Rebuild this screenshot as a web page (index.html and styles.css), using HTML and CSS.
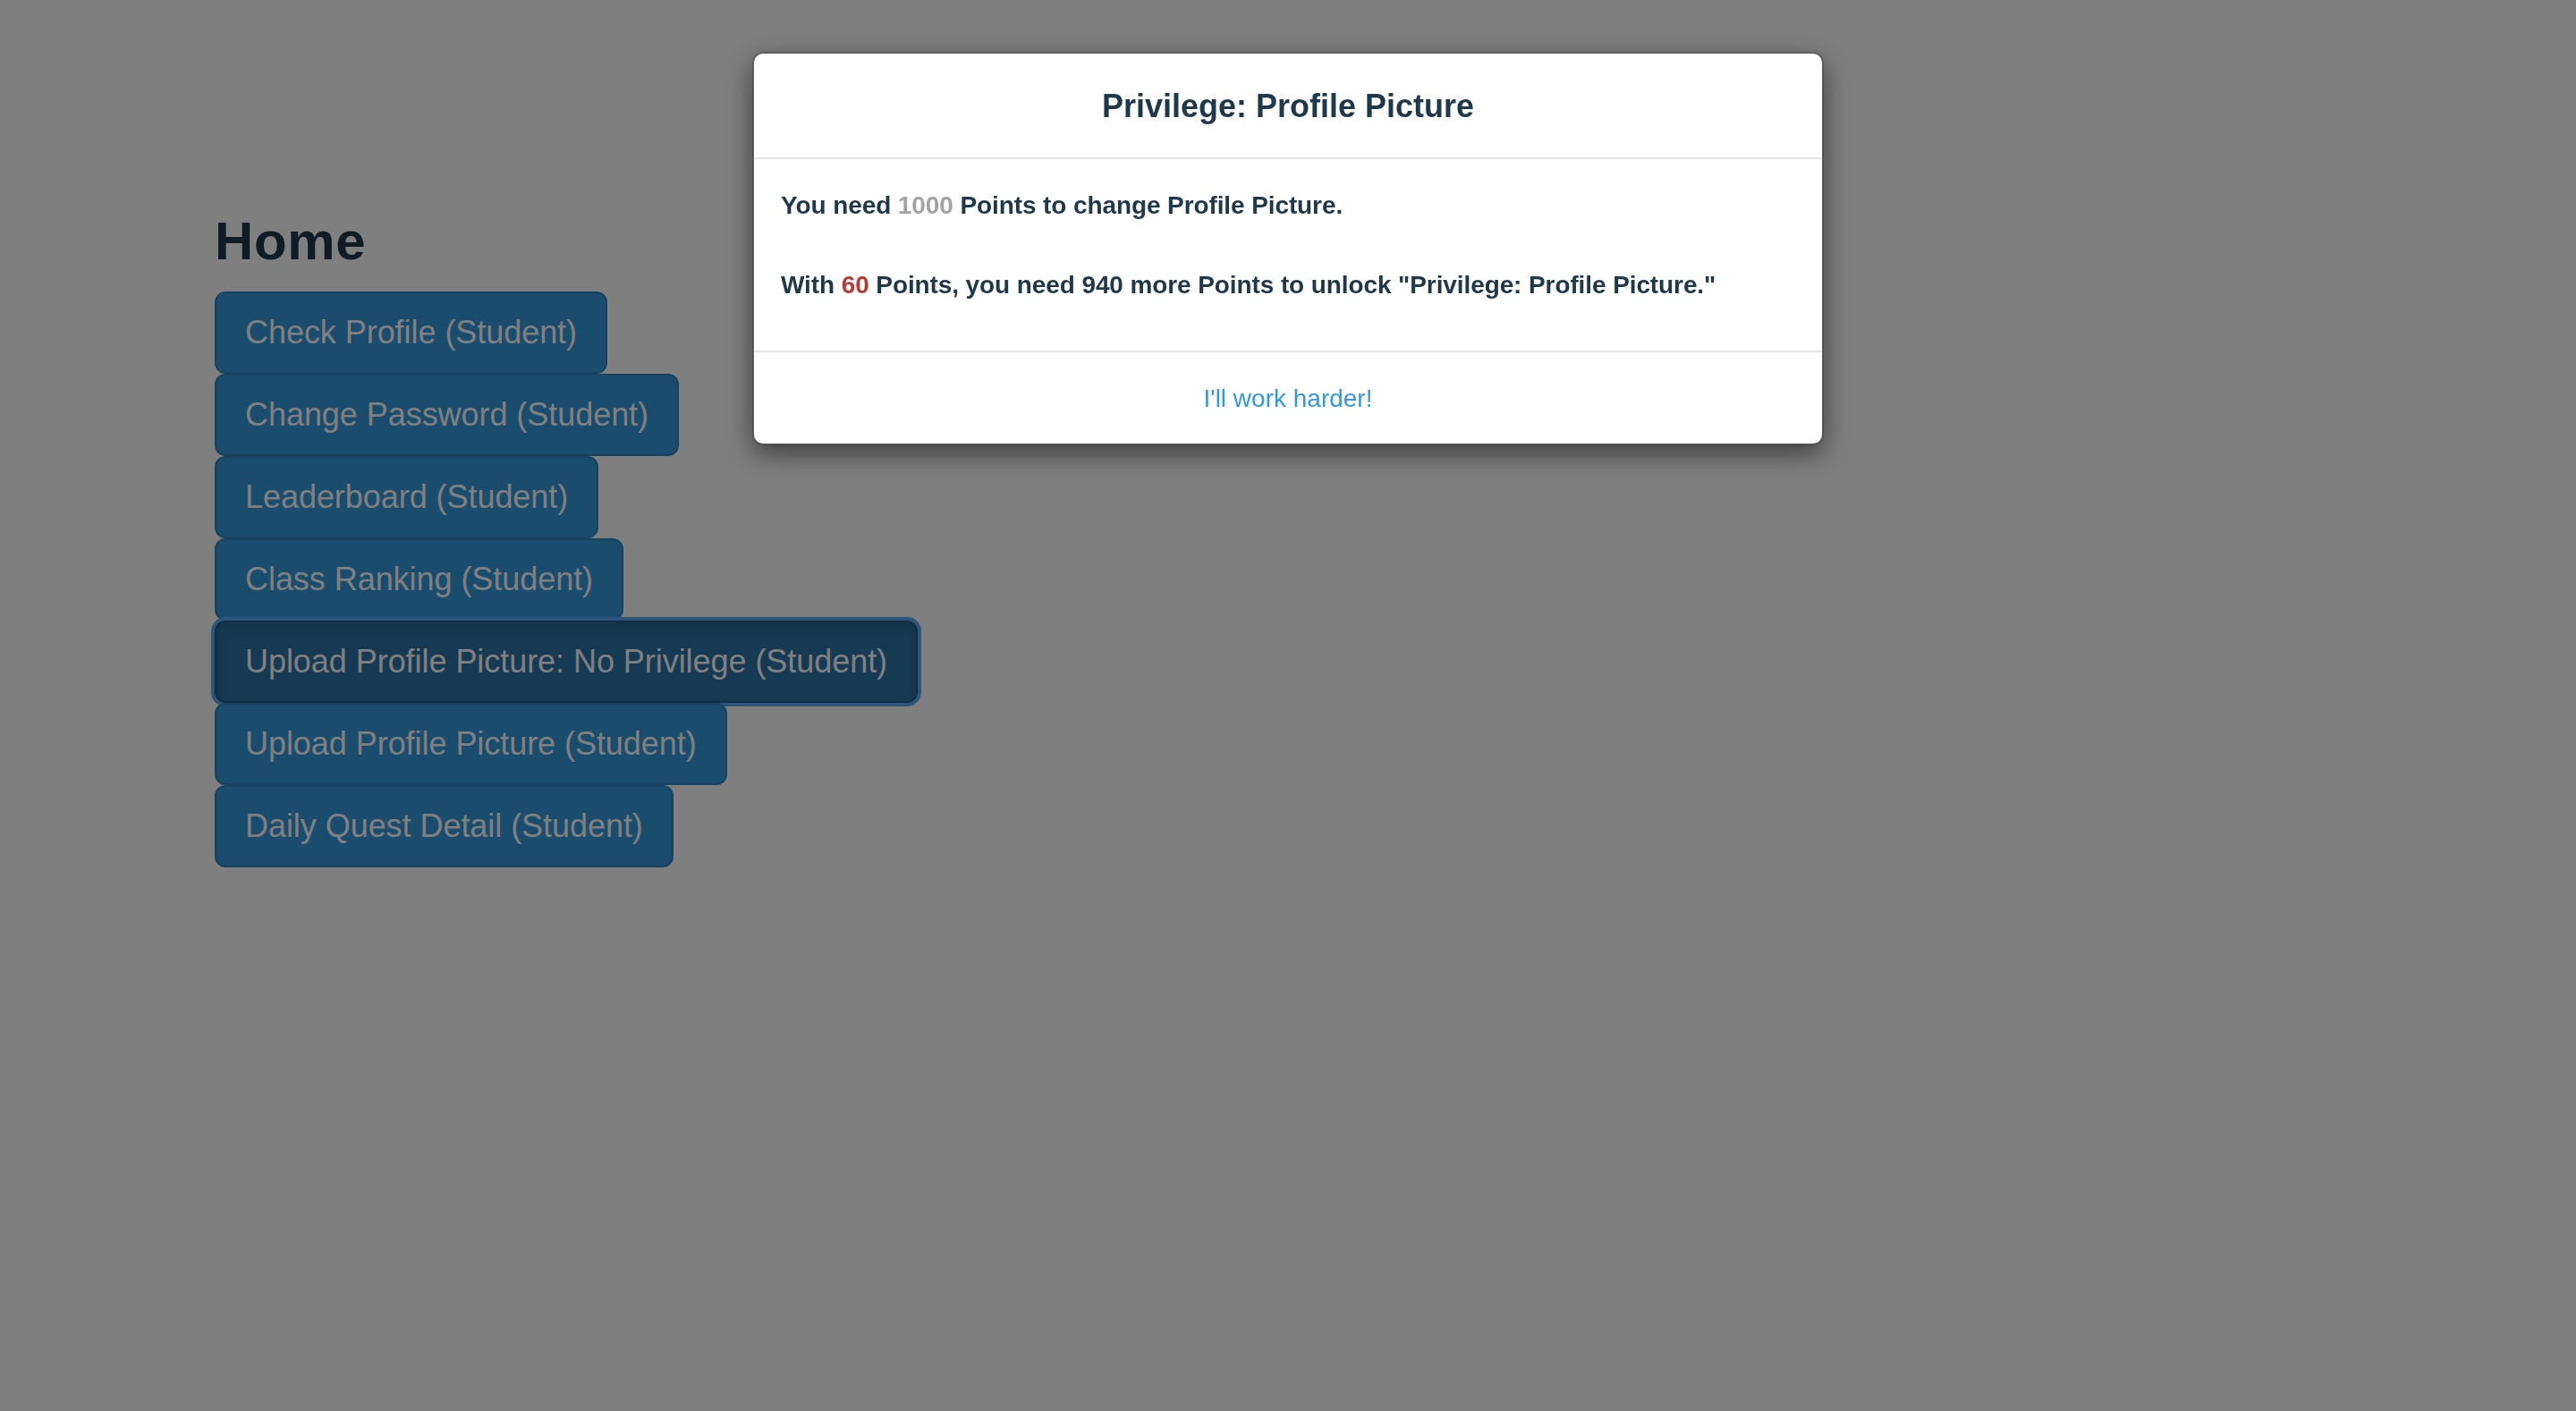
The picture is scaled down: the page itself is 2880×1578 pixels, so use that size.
FILE: index.html
```html
<!DOCTYPE html>
<html lang="en">
<head>
<meta charset="utf-8">
<title>Home</title>
<link rel="stylesheet" href="styles.css">
</head>
<body>
<main class="page">
  <h1 class="page-title">Home</h1>
  <div class="btn-list">
    <a class="btn" href="#">Check Profile (Student)</a>
    <a class="btn" href="#">Change Password (Student)</a>
    <a class="btn" href="#">Leaderboard (Student)</a>
    <a class="btn" href="#">Class Ranking (Student)</a>
    <a class="btn btn-focused" href="#">Upload Profile Picture: No Privilege (Student)</a>
    <a class="btn" href="#">Upload Profile Picture (Student)</a>
    <a class="btn" href="#">Daily Quest Detail (Student)</a>
  </div>
</main>

<div class="backdrop"></div>

<div class="modal">
  <div class="modal-content">
    <div class="modal-header">
      <h4 class="modal-title">Privilege: Profile Picture</h4>
    </div>
    <div class="modal-body">
      <p>You need <span class="muted">1000</span> Points to change Profile Picture.</p>
      <p>With <span class="danger">60</span> Points, you need 940 more Points to unlock "Privilege: Profile Picture."</p>
    </div>
    <div class="modal-footer">
      <a class="modal-link" href="#">I'll work harder!</a>
    </div>
  </div>
</div>
</body>
</html>
```
FILE: styles.css
```css
html, body {
  margin: 0;
  height: 100%;
}

body {
  font-family: "Liberation Sans", Arial, Helvetica, sans-serif;
  background: #ffffff;
  color: #1f394b;
}

.page {
  padding: 237px 0 0 240px;
}

.page-title {
  margin: 0 0 23px;
  font-size: 60px;
  line-height: 66px;
  font-weight: bold;
  letter-spacing: 0.6px;
  color: #1f394b;
}

.btn-list {
  display: flex;
  flex-direction: column;
  align-items: flex-start;
}

.btn {
  display: block;
  padding: 20px 32px;
  font-size: 36px;
  line-height: 48px;
  letter-spacing: -0.05px;
  color: #ffffff;
  background: #3498db;
  border: 2px solid #2e86c1;
  border-radius: 12px;
  text-decoration: none;
  white-space: nowrap;
}

.btn-focused {
  background: #2c74a4;
  border-color: #1f5c86;
  box-shadow: inset 0 6px 10px rgba(0, 0, 0, 0.125), 0 0 0 4px #5aa8f0;
}

.backdrop {
  position: fixed;
  inset: 0;
  background: rgba(0, 0, 2, 0.5);
}

.modal {
  position: fixed;
  inset: 0;
  display: flex;
  justify-content: center;
  align-items: flex-start;
}

.modal-content {
  box-sizing: border-box;
  width: 1198px;
  margin-top: 58px;
  background: #ffffff;
  border: 2px solid rgba(0, 0, 0, 0.2);
  border-radius: 12px;
  box-shadow: 0 10px 30px rgba(0, 0, 0, 0.5);
  background-clip: padding-box;
}

.modal-header {
  padding: 33px 30px 31px;
  border-bottom: 2px solid #e5e5e5;
  text-align: center;
}

.modal-title {
  margin: 0;
  font-size: 36px;
  line-height: 52px;
  font-weight: bold;
  color: #1f394b;
}

.modal-body {
  padding: 32px 30px 53px;
  font-size: 28px;
  line-height: 40px;
  font-weight: bold;
  letter-spacing: -0.1px;
  color: #1f394b;
}

.modal-body p {
  margin: 0;
}

.modal-body p + p {
  margin-top: 49px;
}

.muted {
  color: #a3a3a3;
}

.danger {
  color: #b33c38;
}

.modal-footer {
  padding: 32px 30px 30px;
  border-top: 2px solid #e5e5e5;
  text-align: center;
  font-size: 28px;
  line-height: 40px;
}

.modal-link {
  color: #3498db;
  text-decoration: none;
}
```
